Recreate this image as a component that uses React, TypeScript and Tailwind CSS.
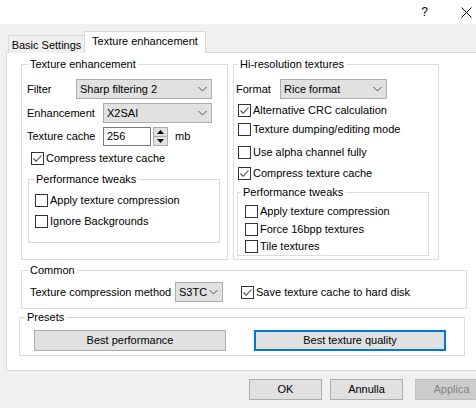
import React from 'react';

const font = { fontFamily: '"Liberation Sans", Arial, sans-serif' };

const CheckBox = ({ checked, label, className = '' }: { checked?: boolean; label: string; className?: string }) => (
  <div className={`flex items-center h-[15px] ${className}`}>
    <span className="w-[13px] h-[13px] border border-[#333333] bg-white flex items-center justify-center shrink-0">
      {checked && (
        <svg width="11" height="11" viewBox="0 0 11 11">
          <polyline points="1.5,5.5 4.2,8.3 9.5,2.5" fill="none" stroke="#444444" strokeWidth="1.1" />
        </svg>
      )}
    </span>
    <span className="ml-[2px] whitespace-nowrap">{label}</span>
  </div>
);

const Select = ({ value, className = '' }: { value: string; className?: string }) => (
  <div className={`h-[20px] bg-[#e1e1e1] border border-[#adadad] flex items-center justify-between pl-[3px] pr-[4px] ${className}`}>
    <span className="whitespace-nowrap">{value}</span>
    <svg width="9" height="6" viewBox="0 0 9 6">
      <polyline points="0.5,1 4.5,5 8.5,1" fill="none" stroke="#555555" strokeWidth="1" />
    </svg>
  </div>
);

const Group = ({
  title,
  legendClass,
  className = '',
  children
}: {
  title: string;
  legendClass: string;
  className?: string;
  children: React.ReactNode;
}) => (
  <fieldset className={`border border-[#dcdcdc] px-0 ${className}`}>
    <legend className={`px-[2px] leading-[15px] ${legendClass}`}>{title}</legend>
    {children}
  </fieldset>
);

export default function App() {
  return (
    <div className="w-[476px] h-[408px] bg-[#f0f0f0] overflow-hidden text-[11px] text-black leading-[15px] relative" style={font}>
      {/* Title bar */}
      <div className="h-[24px] bg-white flex items-center justify-end">
        <span className="text-[12px] mr-[33px]">?</span>
        <svg width="11" height="11" viewBox="0 0 11 11" className="mr-[4px]">
          <line x1="0.5" y1="0.5" x2="10.5" y2="10.5" stroke="#000" strokeWidth="1" />
          <line x1="10.5" y1="0.5" x2="0.5" y2="10.5" stroke="#000" strokeWidth="1" />
        </svg>
      </div>

      <div className="pl-[6px] pt-[7px]">
        {/* Tabs */}
        <div className="flex items-end h-[22px]">
          <div className="ml-[2px] w-[77px] h-[18px] border border-b-0 border-[#d9d9d9] bg-[#f0f0f0] pt-[2px] text-center whitespace-nowrap">
            Basic Settings
          </div>
          <div className="relative z-10 w-[122px] h-[22px] border border-b-0 border-[#d9d9d9] bg-white pt-[2px] -ml-px text-center whitespace-nowrap">
            Texture enhancement
          </div>
        </div>

        {/* Tab page */}
        <div className="-mt-px h-[319px] w-[480px] border border-[#d9d9d9] bg-white pl-[12px] pt-[4px]">
          <div className="flex ml-[2px]">
            <Group title="Texture enhancement" legendClass="ml-[6px]" className="w-[207px] h-[203px]">
              <div className="pl-[5px]">
                <div className="flex items-center mt-[7px]">
                  <span className="w-[49px]">Filter</span>
                  <Select value="Sharp filtering 2" className="w-[136px]" />
                </div>
                <div className="flex items-center mt-[4px]">
                  <span className="w-[76px]">Enhancement</span>
                  <Select value="X2SAI" className="w-[109px]" />
                </div>
                <div className="flex items-center mt-[4px]">
                  <span className="w-[76px]">Texture cache</span>
                  <div className="w-[48px] h-[19px] border border-[#7a7a7a] bg-white pl-[3px] flex items-center">256</div>
                  <div className="ml-[2px] w-[15px] h-[19px] border border-[#adadad] bg-[#e1e1e1] flex flex-col">
                    <div className="flex-1 flex items-center justify-center border-b border-[#adadad]">
                      <svg width="7" height="4" viewBox="0 0 7 4"><polygon points="0,4 3.5,0 7,4" fill="#000" /></svg>
                    </div>
                    <div className="flex-1 flex items-center justify-center">
                      <svg width="7" height="4" viewBox="0 0 7 4"><polygon points="0,0 3.5,4 7,0" fill="#000" /></svg>
                    </div>
                  </div>
                  <span className="ml-[7px]">mb</span>
                </div>
                <CheckBox checked label="Compress texture cache" className="mt-[5px] ml-[4px]" />
                <Group title="Performance tweaks" legendClass="ml-[5px]" className="ml-[1px] mt-[6px] w-[192px] h-[71px]">
                  <div className="pl-[6px]">
                    <CheckBox label="Apply texture compression" className="mt-[6px]" />
                    <CheckBox label="Ignore Backgrounds" className="mt-[6px]" />
                  </div>
                </Group>
              </div>
            </Group>

            <Group title="Hi-resolution textures" legendClass="ml-[4px]" className="ml-[5px] w-[206px] h-[203px]">
              <div className="pl-[2px]">
                <div className="flex items-center mt-[7px]">
                  <span className="w-[44px]">Format</span>
                  <Select value="Rice format" className="w-[107px]" />
                </div>
                <div className="pl-[2px]">
                  <CheckBox checked label="Alternative CRC calculation" className="mt-[4px]" />
                  <CheckBox label="Texture dumping/editing mode" className="mt-[4px]" />
                  <CheckBox label="Use alpha channel fully" className="mt-[8px]" />
                  <CheckBox checked label="Compress texture cache" className="mt-[6px]" />
                </div>
                <Group title="Performance tweaks" legendClass="ml-[3px]" className="ml-px mt-[4px] w-[192px] h-[71px]">
                  <div className="pl-[7px]">
                    <CheckBox label="Apply texture compression" className="mt-[4px]" />
                    <CheckBox label="Force 16bpp textures" className="mt-[3px]" />
                    <CheckBox label="Tile textures" className="mt-[2px]" />
                  </div>
                </Group>
              </div>
            </Group>
          </div>

          <Group title="Common" legendClass="ml-[6px]" className="ml-[2px] mt-[3px] w-[446px] h-[46px]">
            <div className="flex items-center pl-[8px] mt-[4px]">
              <span className="w-[145px] whitespace-nowrap">Texture compression method</span>
              <Select value="S3TC" className="w-[48px]" />
              <CheckBox checked label="Save texture cache to hard disk" className="ml-[18px]" />
            </div>
          </Group>

          <Group title="Presets" legendClass="ml-[5px]" className="mt-px w-[446px] h-[46px]">
            <div className="flex pl-[14px] mt-[5px] gap-[28px]">
              <div className="w-[192px] h-[21px] border border-[#adadad] bg-[#e1e1e1] flex items-center justify-center">
                Best performance
              </div>
              <div className="w-[192px] h-[21px] border-2 border-[#0078d7] bg-[#e1e1e1] flex items-center justify-center">
                Best texture quality
              </div>
            </div>
          </Group>
        </div>
      </div>

      {/* Dialog buttons */}
      <div className="flex mt-[8px] pl-[249px]">
        <div className="w-[73px] h-[21px] border border-[#adadad] bg-[#e1e1e1] flex items-center justify-center shrink-0">OK</div>
        <div className="ml-[8px] w-[73px] h-[21px] border border-[#adadad] bg-[#e1e1e1] flex items-center justify-center shrink-0">Annulla</div>
        <div className="ml-[12px] w-[73px] h-[21px] border border-[#bfbfbf] bg-[#cccccc] text-[#838383] flex items-center justify-center shrink-0">Applica</div>
      </div>
    </div>
  );
}
